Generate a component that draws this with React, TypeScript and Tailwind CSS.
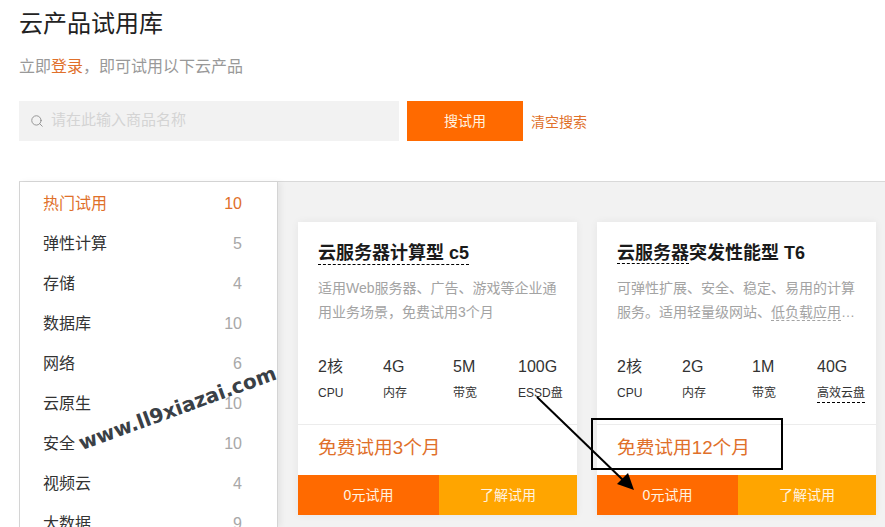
import React, { FC } from "react";
import { Search } from "lucide-react";

const menu = [
  { name: "热门试用", count: 10, active: true },
  { name: "弹性计算", count: 5 },
  { name: "存储", count: 4 },
  { name: "数据库", count: 10 },
  { name: "网络", count: 6 },
  { name: "云原生", count: 10 },
  { name: "安全", count: 10 },
  { name: "视频云", count: 4 },
  { name: "大数据", count: 9 },
];

type Spec = { value: string; label: string; dashed?: boolean };

const Card: FC<{
  title: React.ReactNode;
  desc: React.ReactNode;
  specs: Spec[];
  price: string;
}> = ({ title, desc, specs, price }) => (
  <div className="w-[279px] h-[293px] bg-white flex flex-col shadow-[0_0_8px_rgba(0,0,0,0.06)]">
    <div className="px-5 pt-[19px] h-[202px]">
      <h3 className="text-[18px] leading-6 font-bold text-[#1a1a1a] whitespace-nowrap">{title}</h3>
      <p className="mt-[11px] text-[14px] leading-6 text-[#a3a3a3] whitespace-nowrap">{desc}</p>
      <div className="mt-[31px] grid grid-cols-[65px_70px_65px_1fr]">
        {specs.map((s) => (
          <div key={s.value} className="whitespace-nowrap">
            <div className="text-[16px] leading-6 text-[#333]">{s.value}</div>
            <div className="mt-[6px] text-[12px] leading-4 text-[#333]">
              <span className={s.dashed ? "border-b border-dashed border-black pb-[2px]" : ""}>{s.label}</span>
            </div>
          </div>
        ))}
      </div>
    </div>
    <div className="h-[51px] border-t border-[#ececec] px-5 pb-1 flex items-center text-[18.7px] text-[#e0702a]">{price}</div>
    <div className="h-10 flex text-[14px] text-[#fff3e0]">
      <button className="w-[141px] bg-[#ff6a00]">0元试用</button>
      <button className="flex-1 bg-[#ffa500]">了解试用</button>
    </div>
  </div>
);

export default function App() {
  return (
    <div className="relative w-[885px] h-[527px] overflow-hidden bg-white font-['Liberation_Sans','Noto_Sans_CJK_SC',sans-serif]">
      <div className="pl-[19px] pt-[8px]">
        <h1 className="text-[24px] leading-8 text-[#222]">云产品试用库</h1>
        <p className="mt-[15px] text-[16px] leading-6 text-[#999]">
          立即<span className="text-[#e0702a]">登录</span>，即可试用以下云产品
        </p>
        <div className="mt-[22px] flex items-center">
          <div className="w-[380px] h-10 bg-[#f2f2f2] flex items-center pl-[11px] gap-[7px]">
            <Search className="w-[14px] h-[14px] text-[#8a8a8a]" strokeWidth={1.5} />
            <span className="text-[15px] leading-[38px] h-10 text-[#d4d4d4]">请在此输入商品名称</span>
          </div>
          <button className="ml-2 w-[116px] h-10 bg-[#ff6a00] text-[14px] text-[#fff3e0]">搜试用</button>
          <a className="ml-2 pt-[2px] text-[14px] text-[#e0702a]">清空搜索</a>
        </div>
      </div>

      <div className="mt-10 ml-[19px] h-[346px] border-t border-[#d9d9d9] bg-[#f2f2f2] flex">
        <ul className="w-[259px] shrink-0 h-full bg-white border-l border-r border-[#d4d4d4] pt-[2px] pl-[23px] pr-[35px] shadow-[3px_0_6px_rgba(0,0,0,0.06)]">
          {menu.map((m) => (
            <li
              key={m.name}
              className={`h-10 flex items-center justify-between text-[16px] ${m.active ? "text-[#e0702a]" : "text-[#333]"}`}
            >
              <span>{m.name}</span>
              <span className={m.active ? "text-[#e0702a]" : "text-[#a8a8a8]"}>{m.count}</span>
            </li>
          ))}
        </ul>
        <div className="pl-[20px] pt-10 flex gap-5">
          <Card
            title={
              <span className="border-b border-dashed border-black pb-[1px]">云服务器计算型 c5</span>
            }
            desc={
              <>
                适用Web服务器、广告、游戏等企业通
                <br />
                用业务场景，免费试用3个月
              </>
            }
            specs={[
              { value: "2核", label: "CPU" },
              { value: "4G", label: "内存" },
              { value: "5M", label: "带宽" },
              { value: "100G", label: "ESSD盘" },
            ]}
            price="免费试用3个月"
          />
          <Card
            title={
              <>
                <span className="relative">
                  云服务器
                  <span className="absolute left-0 right-0 bottom-[-1px] border-b border-dashed border-black" />
                </span>
                突发性能型 T6
              </>
            }
            desc={
              <>
                可弹性扩展、安全、稳定、易用的计算
                <br />
                服务。适用轻量级网站、
                <span className="border-b border-dashed border-[#a3a3a3]">低负载应用</span>…
              </>
            }
            specs={[
              { value: "2核", label: "CPU" },
              { value: "2G", label: "内存" },
              { value: "1M", label: "带宽" },
              { value: "40G", label: "高效云盘", dashed: true },
            ]}
            price="免费试用12个月"
          />
        </div>
      </div>

      {/* annotations sitting on top of the screenshot */}
      <div className="absolute left-[591px] top-[418px] w-[192px] h-[52px] border-2 border-black" />
      <svg className="absolute left-0 top-0 pointer-events-none" width="885" height="527">
        <line x1="537" y1="397" x2="624" y2="481" stroke="#000" strokeWidth="2" />
        <polygon points="634,490 617,484 628,473" fill="#000" />
      </svg>
      <div className="absolute left-[73px] top-[396px] -rotate-[20deg] text-[20px] leading-6 font-bold text-[#3a4046] font-['DejaVu_Sans',sans-serif] whitespace-nowrap">
        www.ll9xiazai.com
      </div>
    </div>
  );
}
